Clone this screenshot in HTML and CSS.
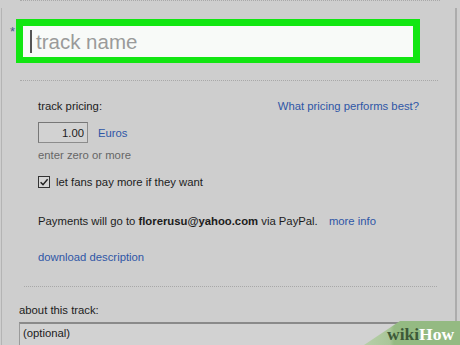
FILE: index.html
```html
<!DOCTYPE html>
<html lang="en">

<head>
    <meta charset="UTF-8" />
    <meta name="viewport" content="width=device-width, initial-scale=1.0" />
    <title>Add Track</title>
    <link rel="stylesheet" href="styles.css">
</head>

<body>
    <div class="top-rule"></div>

    <div class="panel">
        <div class="name-row">
            <span class="required">*</span>
            <div class="name-field">
                <span class="caret"></span>
                <span class="placeholder">track name</span>
            </div>
        </div>

        <div class="rule"></div>

        <div class="pricing">
            <div class="pricing-head">
                <span>track pricing:</span>
                <a href="#" class="link">What pricing performs best?</a>
            </div>

            <div class="price-row">
                <input type="text" class="price-input" value="1.00" />
                <a href="#" class="link">Euros</a>
            </div>
            <div class="hint">enter zero or more</div>

            <label class="check-row">
                <svg class="checkbox" width="12" height="12" viewBox="0 0 12 12">
                    <rect x="0.5" y="0.5" width="11" height="11" fill="#d6d6d6" stroke="#333" />
                    <path d="M2.6 6.2 L5 8.6 L9.6 3.2" fill="none" stroke="#222" stroke-width="1.4" />
                </svg>
                let fans pay more if they want
            </label>

            <div class="payments">
                Payments will go to <b>florerusu@yahoo.com</b> via PayPal.
                <a href="#" class="link more-info">more info</a>
            </div>

            <a href="#" class="link download">download description</a>
        </div>

        <div class="rule rule-lower"></div>

        <div class="about">
            <div class="about-label">about this track:</div>
            <div class="about-box">(optional)</div>
        </div>
    </div>

    <div class="wikihow">
        <span class="wiki">wiki</span><span class="how">How</span>
    </div>
</body>

</html>
```

FILE: styles.css
```css
body {
    margin: 0;
    height: 345px;
    overflow: hidden;
    background-color: #cecece;
    font-family: "Liberation Sans", Arial, sans-serif;
    font-size: 11.3px;
    color: #1c1c1c;
    position: relative;
}

.top-rule {
    margin: 0 20px;
    border-top: 1px dotted #a8a8a8;
}

.panel {
    box-sizing: border-box;
    height: 337px;
    margin: 7px 3px 0 1px;
    padding-top: 11px;
    border-left: 1px solid #b4b4b4;
    border-right: 2px solid #acacac;
    overflow: hidden;
}

.name-row {
    display: flex;
    align-items: flex-start;
    padding-left: 8px;
}

.required {
    width: 6px;
    font-size: 13px;
    line-height: 13px;
    margin-top: 6px;
    color: #4a5a8a;
}

.name-field {
    width: 390px;
    height: 31px;
    border: 7px solid #12e612;
    border-bottom-width: 6px;
    background-color: #f8faf8;
    display: flex;
    align-items: center;
}

.caret {
    width: 2px;
    height: 23px;
    margin-left: 7px;
    background-color: #555;
}

.placeholder {
    margin-left: 4px;
    font-size: 20.5px;
    color: #9a9a9a;
}

.rule {
    margin: 17px 17px 0 18px;
    border-top: 1px dotted #a8a8a8;
}

.rule-lower {
    margin: 22px 18px 0 22px;
}

.pricing {
    padding: 0 36px;
    line-height: 14px;
}

.link {
    color: #2f56a6;
    text-decoration: none;
}

.pricing-head {
    display: flex;
    justify-content: space-between;
    margin-top: 18px;
}

.price-row {
    display: flex;
    align-items: center;
    margin-top: 9px;
}

.price-input {
    width: 45px;
    height: 19px;
    margin: 0;
    padding: 0 3px 0 0;
    border: 1px solid #8c8c8c;
    border-top-color: #777;
    border-left-color: #777;
    background-color: #d2d2d2;
    font-family: "Liberation Sans", Arial, sans-serif;
    font-size: 11.3px;
    color: #1c1c1c;
    text-align: right;
}

.price-row .link {
    margin-left: 10px;
}

.hint {
    margin-top: 5px;
    color: #666;
}

.check-row {
    display: flex;
    align-items: center;
    margin-top: 13px;
}

.checkbox {
    margin-right: 6px;
}

.payments {
    margin-top: 25px;
}

.more-info {
    margin-left: 8px;
}

.download {
    display: block;
    margin-top: 22px;
}

.about {
    padding-left: 17px;
    line-height: 14px;
}

.about-label {
    margin-top: 16px;
}

.about-box {
    width: 377px;
    height: 40px;
    margin-top: 5px;
    padding: 2px 0 0 3px;
    border-top: 2px solid #8a8a8a;
    border-left: 1px solid #9a9a9a;
    border-right: 1px solid #9a9a9a;
    background-color: #d2d2d2;
}

.wikihow {
    position: absolute;
    right: 0;
    bottom: 0;
    width: 73px;
    height: 24px;
    padding-left: 23px;
    clip-path: polygon(36px 0, 100% 0, 100% 100%, 0 100%);
    background: linear-gradient(90deg, #b7cfa9 0, #a9c699 26px, #94ba82 30px, #94ba82 100%);
    font-family: "Liberation Serif", "Times New Roman", serif;
    font-weight: bold;
    font-size: 17.5px;
    line-height: 26px;
}

.wiki {
    color: #3d5a38;
}

.how {
    color: #ffffff;
}
```
